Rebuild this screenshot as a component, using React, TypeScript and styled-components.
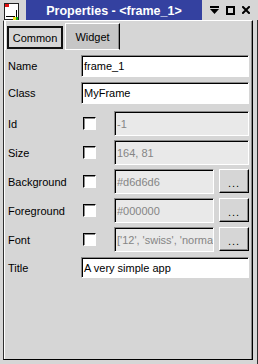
import React from "react";
import styled, { createGlobalStyle } from "styled-components";

const Global = createGlobalStyle`
  html, body { margin: 0; padding: 0; background: #d6d6d6; }
  body { font-family: "Liberation Sans", Arial, sans-serif; font-size: 11px; color: #000; }
`;

const Window = styled.div`
  width: 258px;
  height: 364px;
  background: #d6d6d6;
  display: flex;
  flex-direction: column;
  box-sizing: border-box;
  overflow: hidden;
`;

const TitleRow = styled.div`
  height: 20px;
  display: flex;
  flex: none;
`;

const IconSlot = styled.div`
  width: 26px;
  display: flex;
  align-items: flex-start;
  padding: 3px 0 0 4px;
  box-sizing: border-box;
`;

const TitleBar = styled.div`
  flex: 1;
  background: #3441a0;
  color: #fff;
  font-weight: bold;
  font-size: 12.5px;
  display: flex;
  align-items: center;
  justify-content: center;
  padding-top: 1px;
  box-sizing: border-box;
`;

const Controls = styled.div`
  width: 56px;
  display: flex;
  align-items: center;
  gap: 7px;
  padding-left: 8px;
  box-sizing: border-box;
`;

const Frame = styled.div`
  flex: 1;
  display: flex;
  min-width: 0;
  padding: 0 4px 4px 3px;
  border-right: 1px solid #303030;
  box-sizing: border-box;
`;

const Panel = styled.div`
  flex: 1;
  min-width: 0;
  display: flex;
  flex-direction: column;
  border-left: 1px solid #303030;
  border-right: 1px solid #000;
  border-bottom: 1px solid #000;
  border-top: 1px solid #fff;
  box-shadow: inset 1px 0 0 #fff, inset -1px 0 0 #8a8a8a;
  padding: 0 1px 0 1px;
`;

const TabStrip = styled.div`
  height: 29px;
  display: flex;
  align-items: flex-end;
  flex: none;
`;

const Tab = styled.div<{ $active?: boolean }>`
  box-sizing: border-box;
  display: flex;
  align-items: center;
  justify-content: center;
  height: ${(p) => (p.$active ? "29px" : "27px")};
  width: ${(p) => (p.$active ? "60px" : "55px")};
  background: ${(p) => (p.$active ? "#d6d6d6" : "#c6c6c6")};
  border-left: 1px solid #fff;
  border-top: ${(p) => (p.$active ? "none" : "1px solid #fff")};
  border-right: 1px solid ${(p) => (p.$active ? "#d6d6d6" : "#000")};
  box-shadow: ${(p) => (p.$active ? "none" : "inset -1px 0 0 #8a8a8a")};
  border-bottom: ${(p) => (p.$active ? "none" : "1px solid #fff")};
  padding: ${(p) => (p.$active ? "5px 1px 1px 1px" : "0")};
`;

const FocusBox = styled.div`
  flex: 1;
  align-self: stretch;
  border: 2px solid #111;
  display: flex;
  align-items: center;
  justify-content: center;
`;

const Page = styled.div`
  flex: 1;
  min-width: 0;
  display: flex;
  flex-direction: column;
  padding: 5px 2px 0 3px;
`;

const Row = styled.div<{ $h: number; $mt: number }>`
  display: flex;
  align-items: center;
  min-width: 0;
  height: ${(p) => p.$h}px;
  margin-top: ${(p) => p.$mt}px;
`;

const Label = styled.div`
  width: 73px;
  flex: none;
`;

const Field = styled.div<{ $disabled?: boolean }>`
  flex: 1;
  min-width: 0;
  align-self: stretch;
  box-sizing: border-box;
  display: flex;
  align-items: center;
  padding-left: 2px;
  overflow: hidden;
  white-space: nowrap;
  background: ${(p) => (p.$disabled ? "#e9e9e9" : "#fff")};
  color: ${(p) => (p.$disabled ? "#858585" : "#000")};
  border: 1px solid;
  border-color: #8a8a8a #fff #fff #8a8a8a;
  box-shadow: inset 1px 1px 0 #000;
  margin-left: ${(p) => (p.$disabled ? "18px" : "0")};
`;

const Check = styled.div`
  width: 13px;
  height: 13px;
  margin-left: 2px;
  box-sizing: border-box;
  background: #fff;
  border: 1px solid;
  border-color: #000 #fff #fff #000;
  box-shadow: 1px 1px 0 #8a8a8a inset;
  flex: none;
`;

const DotButton = styled.div`
  width: 30px;
  flex: none;
  align-self: stretch;
  margin: 0 0 1px 5px;
  box-sizing: border-box;
  background: #d6d6d6;
  border: 1px solid;
  border-color: #fff #000 #000 #fff;
  box-shadow: inset -1px -1px 0 #8a8a8a;
  display: flex;
  align-items: center;
  justify-content: center;
  padding-top: 4px;
  font-size: 11px;
  letter-spacing: 1px;
`;

const WindowIcon = () => (
  <svg width="17" height="18" viewBox="0 0 17 18">
    <rect x="0.5" y="0.5" width="14" height="16" fill="#fff" stroke="#222" />
    <rect x="1" y="1" width="4" height="3" fill="#e01010" />
    <rect x="12" y="7" width="1" height="9" fill="#000" />
    <rect x="2" y="13" width="9" height="1" fill="#000" />
    <rect x="9" y="14" width="3" height="3" fill="#f0e020" />
    <rect x="12" y="14" width="2" height="3" fill="#10b020" />
  </svg>
);

const MenuIcon = () => (
  <svg width="9" height="8" viewBox="0 0 9 8">
    <rect x="0" y="0" width="9" height="2" fill="#000" />
    <polygon points="0,3 9,3 4.5,8" fill="#000" />
  </svg>
);

const MaxIcon = () => (
  <svg width="9" height="9" viewBox="0 0 9 9">
    <rect x="1" y="1" width="7" height="7" fill="none" stroke="#000" strokeWidth="2" />
  </svg>
);

const CloseIcon = () => (
  <svg width="8" height="8" viewBox="0 0 8 8">
    <path d="M1 1 L7 7 M7 1 L1 7" stroke="#000" strokeWidth="2" strokeLinecap="square" />
  </svg>
);

type Prop = { label: string; value: string; kind: "edit" | "check" | "button"; h: number; mt: number };

const props: Prop[] = [
  { label: "Name", value: "frame_1", kind: "edit", h: 22, mt: 0 },
  { label: "Class", value: "MyFrame", kind: "edit", h: 22, mt: 5 },
  { label: "Id", value: "-1", kind: "check", h: 25, mt: 7 },
  { label: "Size", value: "164, 81", kind: "check", h: 25, mt: 4 },
  { label: "Background", value: "#d6d6d6", kind: "button", h: 25, mt: 4 },
  { label: "Foreground", value: "#000000", kind: "button", h: 25, mt: 4 },
  { label: "Font", value: "['12', 'swiss', 'normal', 'normal', '0', '']", kind: "button", h: 25, mt: 4 },
  { label: "Title", value: "A very simple app", kind: "edit", h: 21, mt: 5 },
];

export default function App() {
  return (
    <>
      <Global />
      <Window>
        <TitleRow>
          <IconSlot>
            <WindowIcon />
          </IconSlot>
          <TitleBar>Properties - &lt;frame_1&gt;</TitleBar>
          <Controls>
            <MenuIcon />
            <MaxIcon />
            <CloseIcon />
          </Controls>
        </TitleRow>
        <Frame>
          <Panel>
            <TabStrip>
              <Tab $active>
                <FocusBox>Common</FocusBox>
              </Tab>
              <Tab>Widget</Tab>
            </TabStrip>
            <Page>
              {props.map((p) => (
                <Row key={p.label} $h={p.h} $mt={p.mt}>
                  <Label>{p.label}</Label>
                  {p.kind !== "edit" && <Check />}
                  <Field $disabled={p.kind !== "edit"}>{p.value}</Field>
                  {p.kind === "button" && <DotButton>...</DotButton>}
                </Row>
              ))}
            </Page>
          </Panel>
        </Frame>
      </Window>
    </>
  );
}
